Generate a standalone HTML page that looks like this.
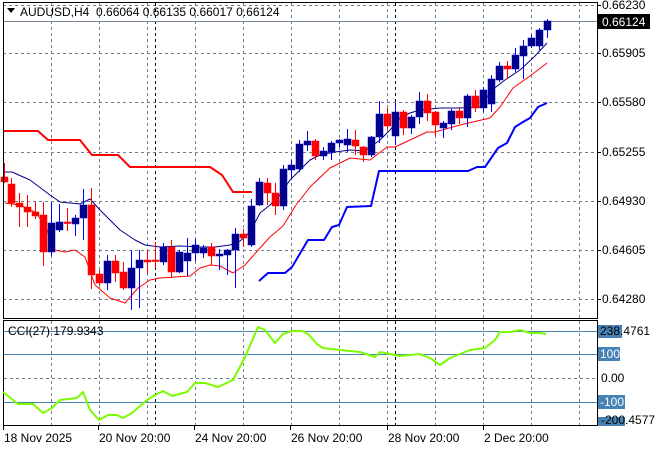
<!DOCTYPE html>
<html><head><meta charset="utf-8"><style>
html,body{margin:0;padding:0;background:#fff;}
svg{display:block;font-family:"Liberation Sans",Tahoma,sans-serif;font-size:12px;}
</style></head><body>
<svg id="s" width="660" height="450" xmlns="http://www.w3.org/2000/svg"></svg>
<script>
const s=document.getElementById('s');let h='';
const L=(x1,y1,x2,y2,c,w,d)=>h+=`<line x1="${x1}" y1="${y1}" x2="${x2}" y2="${y2}" stroke="${c}" stroke-width="${w||1}" ${d?'stroke-dasharray="'+d+'"':''}/>`;
const P=(pts,c,w)=>h+=`<polyline fill="none" stroke="${c}" stroke-width="${w}" stroke-linejoin="round" points="${pts.map(p=>p.join(',')).join(' ')}"/>`;
const T=(x,y,t,c,a)=>h+=`<text x="${x}" y="${y}" fill="${c||'#000'}" ${a||''}>${t}</text>`;
const gx=[51,99,147,195,243,291,339,387,435,483,531,579];
const gy=[5,53,102,152,201,250,299];
gx.forEach(x=>{L(x+.5,3,x+.5,318,'#6f7f8f',1,'3,3');L(x+.5,321,x+.5,425,'#6f7f8f',1,'3,3');});
gy.forEach(y=>L(3,y+.5,597,y+.5,'#6f7f8f',1,'3,3'));
[155,395].forEach(x=>{L(x+.5,3,x+.5,318,'#000',1,'3,3');L(x+.5,321,x+.5,425,'#000',1,'3,3');});
L(3,21.5,597,21.5,'#778899',1);
P([[3,131],[38,131],[48,140],[80,140],[92,155],[118,155],[130,167],[210,167],[222,175],[233,192],[252,192]],'#f00',2);
P([[259,281],[268,273],[285,273],[292,267],[308,240],[324,240],[332,227],[339,225],[347,207],[371,206],[379,171],[468,171],[477,167],[485,167],[498,148],[507,143],[515,127],[523,122],[530,118],[538,107],[547,103]],'#00f',2);
P([[5,203],[20,205],[35,212],[45,225],[55,250],[65,252],[75,250],[85,257],[95,285],[110,298],[125,303],[138,288],[150,280],[160,278],[175,277],[190,276],[200,268],[210,265],[220,266],[233,273],[245,265],[260,248],[270,237],[283,226],[296,205],[310,187],[330,168],[350,158],[370,160],[387,147],[395,147],[410,140],[427,132],[435,132],[460,125],[490,118],[500,107],[513,88],[530,76],[547,63]],'#f00',1);
P([[5,172],[12,172],[30,180],[50,195],[60,202],[70,203],[80,204],[90,199],[100,210],[110,220],[120,230],[135,240],[145,245],[160,247],[180,246],[200,247],[215,247],[230,245],[240,241],[250,232],[260,213],[270,205],[280,195],[290,180],[300,170],[310,160],[320,155],[335,152],[350,150],[365,151],[380,140],[390,130],[400,118],[410,113],[420,110],[440,108],[460,108],[480,107],[492,90],[505,80],[520,70],[534,57],[547,43]],'#00008b',1);
const C=[[4,177,182,163,183],[11,184,203,178,207],[19,203,207,193,227],[27,207,212,195,227],[35,212,216,202,219],[43,215,252,202,266],[51,252,223,202,256],[59,230,222,204,232],[67,222,223,208,231],[75,224,218,215,236],[83,218,205,189,240],[91,205,275,188,289],[99,274,283,270,285],[107,283,261,255,290],[115,261,273,255,282],[123,272,288,262,290],[131,288,268,250,310],[139,268,260,250,308],[147,260,262,250,274],[155,260,261,242,268],[163,262,247,243,265],[171,247,272,240,278],[179,272,252,250,273],[187,261,253,238,276],[195,253,245,239,261],[203,253,248,245,258],[211,247,256,243,265],[219,256,254,249,270],[227,255,250,249,275],[235,250,234,228,288],[243,234,238,229,247],[251,245,206,199,247],[259,205,182,178,206],[267,183,193,178,205],[275,193,206,183,215],[283,206,169,165,210],[291,170,165,160,178],[299,169,144,140,172],[307,145,141,131,151],[315,141,156,139,160],[323,156,151,147,160],[331,152,143,141,160],[339,143,140,139,147],[347,145,139,129,152],[355,140,146,130,155],[363,147,155,146,162],[371,155,137,136,157],[379,137,114,101,143],[387,114,126,108,129],[395,136,112,103,145],[403,112,128,110,135],[411,128,117,115,134],[419,117,101,92,124],[427,101,113,94,121],[435,112,125,111,136],[443,128,123,121,138],[451,124,111,109,130],[459,111,118,107,124],[467,118,96,94,127],[475,96,108,90,112],[483,108,90,87,112],[491,104,79,75,112],[499,80,66,62,82],[507,66,69,61,79],[515,69,55,48,72],[523,56,46,40,79],[531,46,38,35,48],[539,46,30,28,50],[547,30,21,19,38]];
C.forEach(([x,o,c,hi,lo])=>{const col=c<o?'#0000c0':'#f00';const hc=c<o?'#0000ff':'#f00';
L(x+.5,hi,x+.5,lo,hc,1);const t=Math.min(o,c),b=Math.max(o,c);
h+=`<rect x="${x-3}" y="${t}" width="7" height="${Math.max(b-t,1.5)}" fill="${c<o?'#00008b':'#f00'}" stroke="${col}" stroke-width="0.5"/>`;});
h+=`<rect x="3.5" y="2.5" width="594" height="316" fill="none" stroke="#000"/>`;
h+=`<rect x="3.5" y="320.5" width="594" height="105" fill="none" stroke="#000"/>`;
[331,354,402].forEach(y=>L(4,y+.5,597,y+.5,'#4682b4',1));
L(4,378.5,597,378.5,'#6f7f8f',1,'3,3');
P([[3,392],[13,400],[18,404],[33,404],[43,413],[52,408],[60,400],[77,398],[83,392],[90,410],[99,420],[108,415],[117,415],[123,418],[132,413],[147,400],[155,395],[163,391],[172,396],[187,392],[195,383],[205,383],[218,387],[233,380],[245,357],[258,327],[265,330],[275,343],[283,334],[292,331],[302,331],[308,334],[317,344],[323,348],[340,350],[360,352],[375,357],[380,352],[400,356],[420,354],[430,358],[440,365],[450,358],[460,354],[470,350],[485,348],[495,340],[500,332],[510,332],[520,330],[530,333],[540,333],[546,334]],'#7cfc00',2);
h+=`<polygon points="7,8 15,8 11,13" fill="#000"/>`;
T(20,16,'AUDUSD,H4&#160;&#160;0.66064 0.66135 0.66017 0.66124');
T(8,335,'CCI(27) 179.9343');
const pl=['0.66230','0.65905','0.65580','0.65255','0.64930','0.64605','0.64280'];
gy.forEach((y,i)=>{L(597,y+.5,601,y+.5,'#000');T(602,y+4,pl[i]);});
h+=`<rect x="598" y="14" width="52" height="15" fill="#000"/>`;T(602,26,'0.66124','#fff');
h+=`<rect x="598" y="325" width="24" height="13" fill="#4682b4"/>`;T(600,335,'238.4761');
h+=`<rect x="598" y="347" width="22" height="14" fill="#4682b4"/>`;T(600,358,'100','#fff');
T(601,382,'0.00');
h+=`<rect x="598" y="395" width="27" height="14" fill="#4682b4"/>`;T(600,406,'-100','#fff');
h+=`<rect x="598" y="417" width="27" height="9" fill="#4682b4"/>`;T(601,424,'-200.4577');
const dx=[[3,'18 Nov 2025'],[98,'20 Nov 20:00'],[194,'24 Nov 20:00'],[290,'26 Nov 20:00'],[387,'28 Nov 20:00'],[483,'2 Dec 20:00']];
dx.forEach(([x,t])=>{L(x+.5,426,x+.5,430,'#000');T(x+1,442,t);});
s.innerHTML=h;
</script>
</body></html>
